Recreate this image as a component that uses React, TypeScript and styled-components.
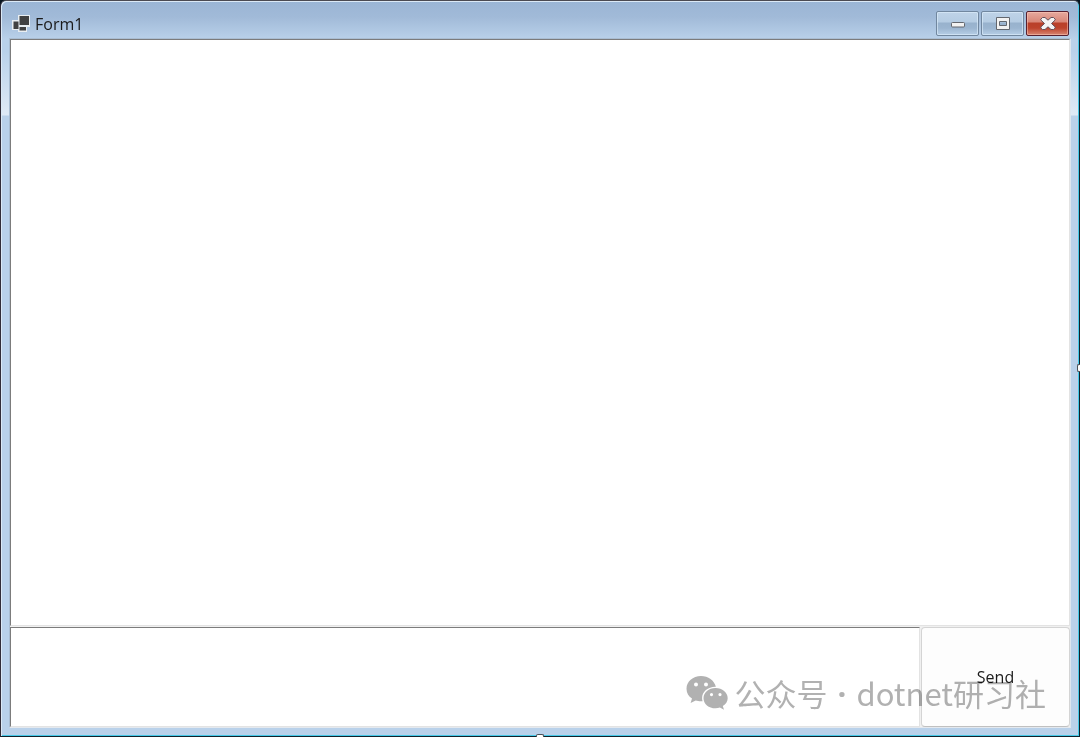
import React from "react";
import styled, { createGlobalStyle } from "styled-components";

const GlobalStyle = createGlobalStyle`
  * { box-sizing: border-box; }
  body {
    margin: 0;
    background: #06141f;
    font-family: "Open Sans", "Noto Sans CJK SC", sans-serif;
    font-size: 16px;
    color: #1a1a1a;
  }
`;

const Window = styled.main`
  position: relative;
  display: flex;
  flex-direction: column;
  min-height: 100vh;
  padding: 0 8px 8px;
  border: 1px solid #10222c;
  border-top-color: #4b4a52;
  border-left-color: #322d38;
  border-radius: 6px 6px 0 0;
  background: linear-gradient(#9ab5d5 0, #a1bad8 16px, #b9d1ea 38px, #b9d1ea 50px, #dfeaf6 114px, #b9d1ea 115px);
  box-shadow: inset 1px 1px 0 #dbe9f6, inset -1px -1px 0 #46c9e8;
`;

const TitleBar = styled.header`
  display: flex;
  align-items: center;
  height: 37px;
  padding: 8px 2px 0 3px;
`;

const Title = styled.h1`
  flex: 1;
  margin: 0 0 0 5px;
  font-size: 16px;
  line-height: 22px;
  font-weight: 400;
`;

const Controls = styled.div`
  display: flex;
  gap: 2px;
`;

const ControlButton = styled.button<{ $close?: boolean }>`
  display: grid;
  place-items: center;
  width: 43px;
  height: 25px;
  padding: 0;
  border: 1px solid ${(p) => (p.$close ? "#57202f" : "#71879f")};
  border-radius: 2px;
  background: ${(p) =>
    p.$close
      ? "linear-gradient(#e6a99e 0, #d98778 10px, #b9402a 11px, #bd432c 16px, #d78572 100%)"
      : "linear-gradient(#bfd3e8 0, #b5cce3 10px, #98b2cd 11px, #9bb5d0 16px, #b6cee6 100%)"};
  box-shadow: inset 0 0 0 1px ${(p) => (p.$close ? "rgba(255,205,190,.5)" : "rgba(220,236,250,.65)")};
`;

const Client = styled.section`
  flex: 1;
  display: flex;
  flex-direction: column;
  border: 1px solid #a9bdd2;
  border-right-color: #dce6ef;
  border-bottom-color: #e4e9ef;
  background: #f0f0f0;
`;

const TextBox = styled.textarea`
  display: block;
  flex: 1;
  min-width: 0;
  margin: 0;
  padding: 4px;
  border: 1px solid #e3e3e3;
  border-top-color: #7c7c7c;
  border-left-color: #7c7c7c;
  border-radius: 0;
  outline: 0;
  resize: none;
  background: #fff;
  font: inherit;
`;

const Composer = styled.form`
  display: flex;
  height: 101px;
  padding-top: 1px;
  gap: 1px;
`;

const SendButton = styled.button`
  width: 149px;
  border: 1px solid #d4d4d4;
  border-bottom-color: #c0c0c0;
  border-radius: 4px;
  background: #fdfdfd;
  color: #1a1a1a;
  font: inherit;
`;

const ResizeHandle = styled.span<{ $side: "right" | "bottom" }>`
  position: absolute;
  background: #fff;
  border: 1px solid #4d5056;
  ${(p) =>
    p.$side === "right"
      ? "right: -1px; top: 50%; width: 3px; height: 8px; margin-top: -5px; border-right: 0; border-radius: 2px 0 0 2px;"
      : "bottom: -1px; left: 50%; width: 8px; height: 3px; margin-left: -4px; border-bottom: 0; border-radius: 2px 2px 0 0;"}
`;

const Watermark = styled.div`
  position: absolute;
  right: 33px;
  bottom: 21px;
  display: flex;
  align-items: center;
  gap: 7px;
  color: #b1b1b1;
  font-family: "Noto Sans CJK SC", sans-serif;
  font-size: 31px;
  line-height: 44px;
  white-space: nowrap;
  pointer-events: none;
  mix-blend-mode: multiply;
`;

const Caption = styled.span`
  display: flex;
  gap: 10px;
`;

const Dot = styled.span`
  font-family: "Open Sans", sans-serif;
  font-weight: 700;
`;

function AppIcon() {
  return (
    <svg width="18" height="18" viewBox="0 0 18 18" aria-hidden="true">
      <path d="M6 0H18V12H15V17H6V15H0V5H6Z" fill="#e9eef2" />
      <path d="M7.500 1H17V10H7.500ZM1.500 6.500H6.500V14H1.500ZM7.500 12H14V15.500H7.500Z" fill="#414141" />
    </svg>
  );
}

function MinimizeIcon() {
  return (
    <svg width="16" height="14" viewBox="0 0 16 14" aria-hidden="true">
      <rect x="1.5" y="5.5" width="13" height="4.500" rx="1" fill="#f2f2f2" stroke="#63676e" />
    </svg>
  );
}

function MaximizeIcon() {
  return (
    <svg width="16" height="14" viewBox="0 0 16 14" aria-hidden="true">
      <path fillRule="evenodd" d="M1.500.5H14.500V12.500H1.500ZM4.500 4.500V8.500H11.500V4.500Z" fill="#f2f2f2" stroke="#63676e" />
    </svg>
  );
}

function CloseIcon() {
  return (
    <svg width="16" height="14" viewBox="0 0 16 14" aria-hidden="true">
      <path
        d="M2.500.5H5L8 3.200L11 .5H13.500L15.200 2.200V3L11.500 6.500L15.200 10V11L13.500 12.500H11L8 9.800L5 12.500H2.500L.8 11V10L4.500 6.500L.8 3V2.200Z"
        fill="#f4f4f4"
        stroke="#65505a"
        strokeLinejoin="round"
      />
    </svg>
  );
}

function ChatIcon() {
  return (
    <svg width="42" height="34" viewBox="0 0 42 34" aria-hidden="true" fill="#b1b1b1">
      <path
        fillRule="evenodd"
        d="M15 0C6.800 0 .5 5.600.5 12.700c0 4.200 2.100 7.600 5.500 9.900L4.600 27l5.100-2.600c2 .6 4 1 6.900.8-.4-1.100-.5-2.100-.5-3.300 0-6.200 5.900-11.200 13.100-11.200h.7C28.300 4.500 22.200 0 15 0ZM10 6.500a2 2 0 1 1 0 4a2 2 0 1 1 0-4ZM20 6.500a2 2 0 1 1 0 4a2 2 0 1 1 0-4Z"
      />
      <path
        fillRule="evenodd"
        d="M29.500 12C22.700 12 17.500 16.500 17.500 22.200S22.700 32.300 29.500 32.300c1.600 0 3.100-.3 4.400-.7L38 33.700l-1.200-3.600c3-1.900 4.900-4.700 4.900-7.900C41.700 16.500 36.300 12 29.500 12ZM25.500 17a1.600 1.600 0 1 1 0 3.200a1.600 1.600 0 1 1 0-3.200ZM34 17a1.600 1.600 0 1 1 0 3.200a1.600 1.600 0 1 1 0-3.200Z"
      />
    </svg>
  );
}

export default function App() {
  return (
    <>
      <GlobalStyle />
      <Window>
        <TitleBar>
          <AppIcon />
          <Title>Form1</Title>
          <Controls>
            <ControlButton type="button" aria-label="Minimize">
              <MinimizeIcon />
            </ControlButton>
            <ControlButton type="button" aria-label="Maximize">
              <MaximizeIcon />
            </ControlButton>
            <ControlButton type="button" aria-label="Close" $close>
              <CloseIcon />
            </ControlButton>
          </Controls>
        </TitleBar>
        <Client>
          <TextBox aria-label="Conversation" readOnly />
          <Composer onSubmit={(e) => e.preventDefault()}>
            <TextBox aria-label="Message" />
            <SendButton type="submit">Send</SendButton>
          </Composer>
        </Client>
        <Watermark>
          <ChatIcon />
          <Caption>
            <span>公众号</span>
            <Dot>·</Dot>
            <span>dotnet研习社</span>
          </Caption>
        </Watermark>
        <ResizeHandle $side="right" />
        <ResizeHandle $side="bottom" />
      </Window>
    </>
  );
}
